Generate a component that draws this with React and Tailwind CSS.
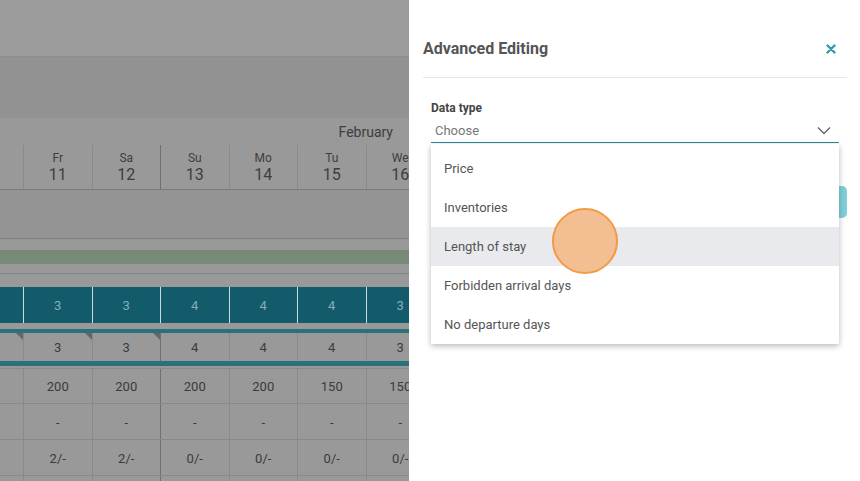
import React from "react";

const days = [
  { name: "Fr", num: 11 },
  { name: "Sa", num: 12 },
  { name: "Su", num: 13 },
  { name: "Mo", num: 14 },
  { name: "Tu", num: 15 },
  { name: "We", num: 16 },
];

const options = ["Price", "Inventories", "Length of stay", "Forbidden arrival days", "No departure days"];

// one row of the (dimmed) calendar grid behind the backdrop
const GridRow = ({ values, height, className = "", lineClass = "border-[#8a8a8a]", sunLine = "border-[#6f6f6f]", textClass = "text-[#3b3b3b]", corners = [] }) => (
  <div className={`grid grid-cols-[23px_repeat(6,68.5px)] ${height} ${className}`}>
    <div className="relative">
      {corners.includes(0) && (
        <span className="absolute top-0 right-0 w-0 h-0 border-t-[7px] border-l-[7px] border-t-[#666] border-l-transparent" />
      )}
    </div>
    {values.map((v, i) => (
      <div
        key={i}
        className={`relative flex items-center justify-center pt-[2px] border-l ${i === 2 ? sunLine : lineClass} ${textClass} text-[13px]`}
      >
        {corners.includes(i + 1) && (
          <span className="absolute top-0 right-0 w-0 h-0 border-t-[7px] border-l-[7px] border-t-[#666] border-l-transparent" />
        )}
        {v}
      </div>
    ))}
  </div>
);

const Calendar = () => (
  <div className="w-[409px] shrink-0 h-full overflow-hidden bg-[#999999] flex flex-col">
    <div className="h-[57px] shrink-0 bg-[#9b9b9b] border-b border-[#8e8e8e]" />
    <div className="h-[61px] shrink-0 bg-[#929292]" />
    <div className="h-[27px] shrink-0 flex items-center justify-end pr-[16px] pt-[2px] text-[14px] text-[#3d3d3d]">
      February
    </div>

    {/* day header */}
    <div className="grid grid-cols-[23px_repeat(6,68.5px)] h-[45px] shrink-0 border-b border-[#7b7b7b]">
      <div />
      {days.map((d, i) => (
        <div
          key={d.num}
          className={`flex flex-col items-center pt-[6px] border-l ${i === 2 ? "border-[#6f6f6f]" : "border-[#8a8a8a]"} text-[#3e3e3e]`}
        >
          <span className="text-[12px] leading-[14px]">{d.name}</span>
          <span className="text-[16px] leading-[19px]">{d.num}</span>
        </div>
      ))}
    </div>

    <div className="h-[49px] shrink-0 bg-[#949494] border-b border-[#7e7e7e]" />
    <div className="h-[11px] shrink-0" />
    <div className="h-[14px] shrink-0 bg-[#778a77]" />
    <div className="h-[10px] shrink-0 border-b border-[#818181]" />
    <div className="h-[13px] shrink-0" />

    <GridRow
      values={["3", "3", "4", "4", "4", "3"]}
      height="h-[36px] shrink-0"
      className="bg-[#135b6a]"
      lineClass="border-[#c9d9dc]"
      sunLine="border-[#c9d9dc]"
      textClass="text-[#82afb8]"
    />
    <div className="h-[6px] shrink-0" />
    <div className="h-[4px] shrink-0 bg-[#2a7179]" />
    <GridRow
      values={["3", "3", "4", "4", "4", "3"]}
      height="h-[28px] shrink-0"
      corners={[0, 1, 2]}
    />
    <div className="h-[5px] shrink-0 bg-[#2a7179]" />
    <div className="h-[3px] shrink-0 border-b border-[#8a8a8a]" />

    <GridRow values={["200", "200", "200", "200", "150", "150"]} height="h-[35px] shrink-0" className="border-b border-[#888]" />
    <GridRow values={["-", "-", "-", "-", "-", "-"]} height="h-[36px] shrink-0" className="border-b border-[#888]" />
    <GridRow values={["2/-", "2/-", "0/-", "0/-", "0/-", "0/-"]} height="h-[36px] shrink-0" className="border-b border-[#888]" />
    <GridRow values={["", "", "", "", "", ""]} height="h-[20px] shrink-0" />
  </div>
);

const Panel = () => (
  <div className="flex-1 h-full bg-white relative pl-[14px] pr-[13px]">
    <div className="h-[78px] flex items-center justify-between border-b border-[#e6e6e6] pt-[20px]">
      <h2 className="text-[16px] font-bold text-[#555]">Advanced Editing</h2>
      <button className="w-[20px] h-[20px] flex items-center justify-center mr-[6px]">
        <svg width="10" height="10" viewBox="0 0 10 10">
          <path d="M1.5 1.5 L8.5 8.5 M8.5 1.5 L1.5 8.5" stroke="#2a9dac" strokeWidth="2.4" strokeLinecap="round" />
        </svg>
      </button>
    </div>

    <div className="px-[8px] pt-[23px]">
      <label className="block text-[12px] font-bold text-[#454545] leading-[15px]">Data type</label>
      <div className="relative">
        <div className="h-[27px] flex items-center justify-between pl-[4px] pr-[8px] pt-[3px] border-b border-[#2a8a96]">
          <span className="text-[13px] text-[#777]">Choose</span>
          <svg width="14" height="9" viewBox="0 0 14 9">
            <path d="M1 1.5 L7 7.5 L13 1.5" fill="none" stroke="#666" strokeWidth="1.4" />
          </svg>
        </div>

        {/* button partly hidden under the open menu */}
        <div className="flex justify-end mt-[43px] mr-[-8px]">
          <div className="w-[100px] h-[32px] rounded-[5px] bg-[#7fd0d9]" />
        </div>

        {/* open menu */}
        <ul className="absolute left-0 right-0 top-[28px] bg-white shadow-[0_2px_6px_rgba(0,0,0,0.28)] pt-[5px] z-10">
          {options.map((o) => (
            <li
              key={o}
              className={`h-[39px] flex items-center pl-[13px] text-[13px] text-[#555] ${o === "Length of stay" ? "bg-[#e8eaed]" : ""}`}
            >
              {o}
            </li>
          ))}
        </ul>
      </div>
    </div>
  </div>
);

export default function App() {
  return (
    <div className="relative w-[860px] h-[481px] overflow-hidden flex font-['Roboto',sans-serif]">
      <Calendar />
      <Panel />
      {/* click marker */}
      <div className="absolute left-[552px] top-[208px] w-[66px] h-[66px] rounded-full bg-[#f3bf92] border-2 border-[#f29a46] z-20" />
    </div>
  );
}
